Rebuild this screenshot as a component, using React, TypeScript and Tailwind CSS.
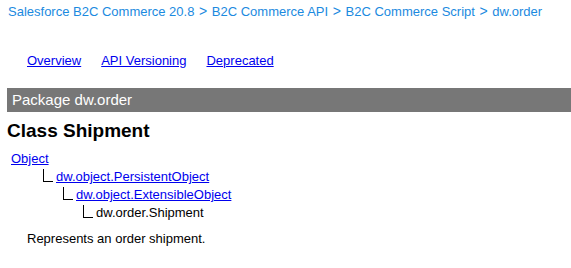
import React from "react";

const Elbow: React.FC = () => (
  <span className="inline-block w-[10px] h-[13px] border-l border-b border-black mr-[3px] -mb-[1px]" />
);

const Sep: React.FC = () => <span className="mx-[1px] text-[14px]">&gt;</span>;

const App: React.FC = () => {
  return (
    <div className="w-[571px] h-[268px] bg-white overflow-hidden font-['Liberation_Sans',Arial,sans-serif] text-[13px] text-black">
      <div className="pl-[8px] pt-[3px] text-[#1b8ae0] leading-[17px]">
        Salesforce B2C Commerce 20.8 <Sep /> B2C Commerce API <Sep /> B2C Commerce Script <Sep /> dw.order
      </div>
      <div className="flex gap-[20px] pl-[27px] mt-[32px] leading-[17px]">
        <a href="#" className="text-[#0000ee] underline">Overview</a>
        <a href="#" className="text-[#0000ee] underline">API Versioning</a>
        <a href="#" className="text-[#0000ee] underline">Deprecated</a>
      </div>
      <div className="ml-[7px] mt-[19px] h-[24px] bg-[#777777] text-white text-[15px] leading-[24px] pl-[5px]">
        Package dw.order
      </div>
      <h1 className="pl-[7px] mt-[8px] text-[19px] font-bold leading-[22px]">Class Shipment</h1>
      <div className="pl-[11px] mt-[8px] leading-[18px]">
        <div>
          <a href="#" className="text-[#0000ee] underline">Object</a>
        </div>
        <div className="pl-[32px]">
          <Elbow />
          <a href="#" className="text-[#0000ee] underline">dw.object.PersistentObject</a>
        </div>
        <div className="pl-[52px]">
          <Elbow />
          <a href="#" className="text-[#0000ee] underline">dw.object.ExtensibleObject</a>
        </div>
        <div className="pl-[72px]">
          <Elbow />
          <span>dw.order.Shipment</span>
        </div>
      </div>
      <p className="pl-[27px] mt-[8px] leading-[17px]">Represents an order shipment.</p>
    </div>
  );
};

export default App;
